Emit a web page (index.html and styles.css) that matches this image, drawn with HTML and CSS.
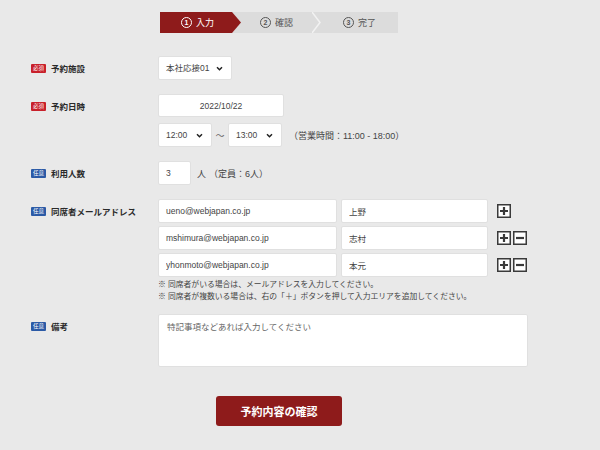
FILE: index.html
```html
<!DOCTYPE html>
<html lang="ja">
<head>
    <meta charset="UTF-8">
    <meta name="viewport" content="width=device-width, initial-scale=1.0">
    <title>予約入力</title>
    <link rel="stylesheet" href="styles.css">
</head>
<body>
    <div class="page">
        <div class="steps">
            <div class="step active"><span class="num">1</span>入力</div>
            <div class="step"><span class="num">2</span>確認</div>
            <svg class="sep" width="9" height="21" viewBox="0 0 9 21"><polyline points="0,0 8,10.5 0,21" fill="none" stroke="#f2f2f2" stroke-width="1.5"/></svg>
            <div class="step last"><span class="num">3</span>完了</div>
        </div>

        <form class="form">
            <div class="row">
                <div class="label"><span class="badge req">必須</span>予約施設</div>
                <div class="field">
                    <select class="select sel-room">
                        <option>本社応接01</option>
                    </select>
                </div>
            </div>

            <div class="row">
                <div class="label"><span class="badge req">必須</span>予約日時</div>
                <div class="field">
                    <input class="input date" type="text" value="2022/10/22">
                    <div class="line">
                        <select class="select sel-time"><option>12:00</option></select>
                        <span class="tilde">〜</span>
                        <select class="select sel-time"><option>13:00</option></select>
                        <span class="note-inline">（営業時間：11:00 - 18:00）</span>
                    </div>
                </div>
            </div>

            <div class="row">
                <div class="label"><span class="badge opt">任意</span>利用人数</div>
                <div class="field">
                    <div class="line first">
                        <input class="input num-in" type="text" value="3">
                        <span class="unit">人</span>
                        <span class="note-inline">（定員：6人）</span>
                    </div>
                </div>
            </div>

            <div class="row">
                <div class="label"><span class="badge opt">任意</span>同席者メールアドレス</div>
                <div class="field">
                    <div class="mail-row first">
                        <input class="input mail" type="text" value="ueno@webjapan.co.jp">
                        <input class="input name" type="text" value="上野">
                        <div class="btns">
                            <svg class="ico" width="14" height="14" viewBox="0 0 14 14"><rect x="0.75" y="0.75" width="12.5" height="12.5" fill="#fff" stroke="#3a3a3a" stroke-width="1.5"/><path d="M7 3v8M3 7h8" stroke="#3a3a3a" stroke-width="2.2"/></svg>
                        </div>
                    </div>
                    <div class="mail-row">
                        <input class="input mail" type="text" value="mshimura@webjapan.co.jp">
                        <input class="input name" type="text" value="志村">
                        <div class="btns">
                            <svg class="ico" width="14" height="14" viewBox="0 0 14 14"><rect x="0.75" y="0.75" width="12.5" height="12.5" fill="#fff" stroke="#3a3a3a" stroke-width="1.5"/><path d="M7 3v8M3 7h8" stroke="#3a3a3a" stroke-width="2.2"/></svg>
                            <svg class="ico" width="14" height="14" viewBox="0 0 14 14"><rect x="0.75" y="0.75" width="12.5" height="12.5" fill="#fff" stroke="#3a3a3a" stroke-width="1.5"/><path d="M3 7h8" stroke="#3a3a3a" stroke-width="2.2"/></svg>
                        </div>
                    </div>
                    <div class="mail-row">
                        <input class="input mail" type="text" value="yhonmoto@webjapan.co.jp">
                        <input class="input name" type="text" value="本元">
                        <div class="btns">
                            <svg class="ico" width="14" height="14" viewBox="0 0 14 14"><rect x="0.75" y="0.75" width="12.5" height="12.5" fill="#fff" stroke="#3a3a3a" stroke-width="1.5"/><path d="M7 3v8M3 7h8" stroke="#3a3a3a" stroke-width="2.2"/></svg>
                            <svg class="ico" width="14" height="14" viewBox="0 0 14 14"><rect x="0.75" y="0.75" width="12.5" height="12.5" fill="#fff" stroke="#3a3a3a" stroke-width="1.5"/><path d="M3 7h8" stroke="#3a3a3a" stroke-width="2.2"/></svg>
                        </div>
                    </div>
                    <p class="notes">※ 同席者がいる場合は、メールアドレスを入力してください。<br>※ 同席者が複数いる場合は、右の「＋」ボタンを押して入力エリアを追加してください。</p>
                </div>
            </div>

            <div class="row">
                <div class="label"><span class="badge opt">任意</span>備考</div>
                <div class="field">
                    <textarea class="memo" placeholder="特記事項などあれば入力してください"></textarea>
                </div>
            </div>

            <div class="submit-area">
                <button class="submit" type="button">予約内容の確認</button>
            </div>
        </form>
    </div>
</body>
</html>
```

FILE: styles.css
```css
*{
    margin: 0;
    padding: 0;
    box-sizing: border-box;
}
body{
    background-color: #e9e9e9;
    color: #333;
    font-family: "Liberation Sans", "Noto Sans CJK JP", sans-serif;
    font-size: 9px;
}
.page{
    width: 558px;
}

/* step bar */
.steps{
    display: flex;
    width: 238px;
    height: 21px;
    margin: 12px auto 0;
    background-color: #dcdcdc;
    color: #555;
    font-size: 9px;
}
.step{
    display: flex;
    align-items: center;
    justify-content: center;
    gap: 4px;
    width: 71px;
}
.step.active{
    width: 81px;
    padding-right: 6px;
    background-color: #8e1b1b;
    color: #fff;
    clip-path: polygon(0 0, calc(100% - 9px) 0, 100% 50%, calc(100% - 9px) 100%, 0 100%);
}
.step.last{
    width: 77px;
}
.num{
    display: flex;
    align-items: center;
    justify-content: center;
    width: 11px;
    height: 11px;
    border: 1.5px solid currentColor;
    border-radius: 50%;
    font-size: 7px;
    font-weight: bold;
}
.sep{
    display: block;
}

/* form */
.form{
    margin-top: 23px;
}
.row{
    display: grid;
    grid-template-columns: 127px 1fr;
    padding-left: 31px;
    margin-bottom: 14px;
}
.label{
    display: flex;
    align-items: center;
    gap: 5px;
    height: 24px;
    font-weight: bold;
    font-size: 8.5px;
    color: #2a2a2a;
}
.badge{
    display: inline-flex;
    align-items: center;
    justify-content: center;
    width: 15px;
    height: 9px;
    font-size: 5.5px;
    font-weight: normal;
    color: #fff;
    border-radius: 1px;
}
.req{
    background-color: #c8202a;
}
.opt{
    background-color: #2b5aa6;
}

.input, .select, .memo{
    height: 24px;
    background-color: #fff;
    border: 1px solid #e0e0e0;
    border-radius: 2px;
    color: #444;
    font-family: "Liberation Sans", "Noto Sans CJK JP", sans-serif;
    font-size: 8.5px;
    padding: 0 7px;
    outline: none;
}
.select{
    appearance: none;
    background-image: url("data:image/svg+xml;utf8,<svg xmlns='http://www.w3.org/2000/svg' width='8' height='6' viewBox='0 0 8 6'><polyline points='1,1.5 4,4.5 7,1.5' fill='none' stroke='%23222' stroke-width='1.8'/></svg>");
    background-repeat: no-repeat;
    background-position: right 8px center;
    background-size: 7px 5px;
}
.sel-room{
    width: 74px;
}
.sel-time{
    width: 54px;
}
.date{
    display: block;
    width: 126px;
    height: 23px;
    text-align: center;
}
.line{
    display: flex;
    align-items: center;
    margin-top: 6px;
}
.line.first{
    margin-top: 0;
}
.tilde{
    width: 16px;
    text-align: center;
    color: #666;
}
.note-inline{
    margin-left: 7px;
    color: #444;
    font-size: 9px;
}
.num-in{
    width: 33px;
}
.unit{
    margin-left: 6px;
    color: #444;
}
.unit + .note-inline{
    margin-left: 3px;
}

.mail-row{
    display: flex;
    align-items: center;
    margin-top: 3px;
}
.mail-row.first{
    margin-top: 0;
}
.mail{
    width: 179px;
}
.name{
    width: 147px;
    margin-left: 4px;
}
.btns{
    display: flex;
    gap: 2px;
    margin-left: 9px;
}
.ico{
    display: block;
}
.notes{
    margin-top: 2px;
    margin-bottom: -3px;
    font-size: 7.8px;
    line-height: 12px;
    color: #444;
}

.memo{
    display: block;
    width: 370px;
    height: 53px;
    padding: 5px 8px;
    resize: none;
}
.memo::placeholder{
    color: #666;
}

.submit-area{
    display: flex;
    justify-content: center;
    margin-top: 29px;
}
.submit{
    width: 126px;
    height: 30px;
    background-color: #8e1b1b;
    color: #fff;
    border: none;
    border-radius: 3px;
    font-family: "Liberation Sans", "Noto Sans CJK JP", sans-serif;
    font-size: 11px;
    font-weight: bold;
}
```
